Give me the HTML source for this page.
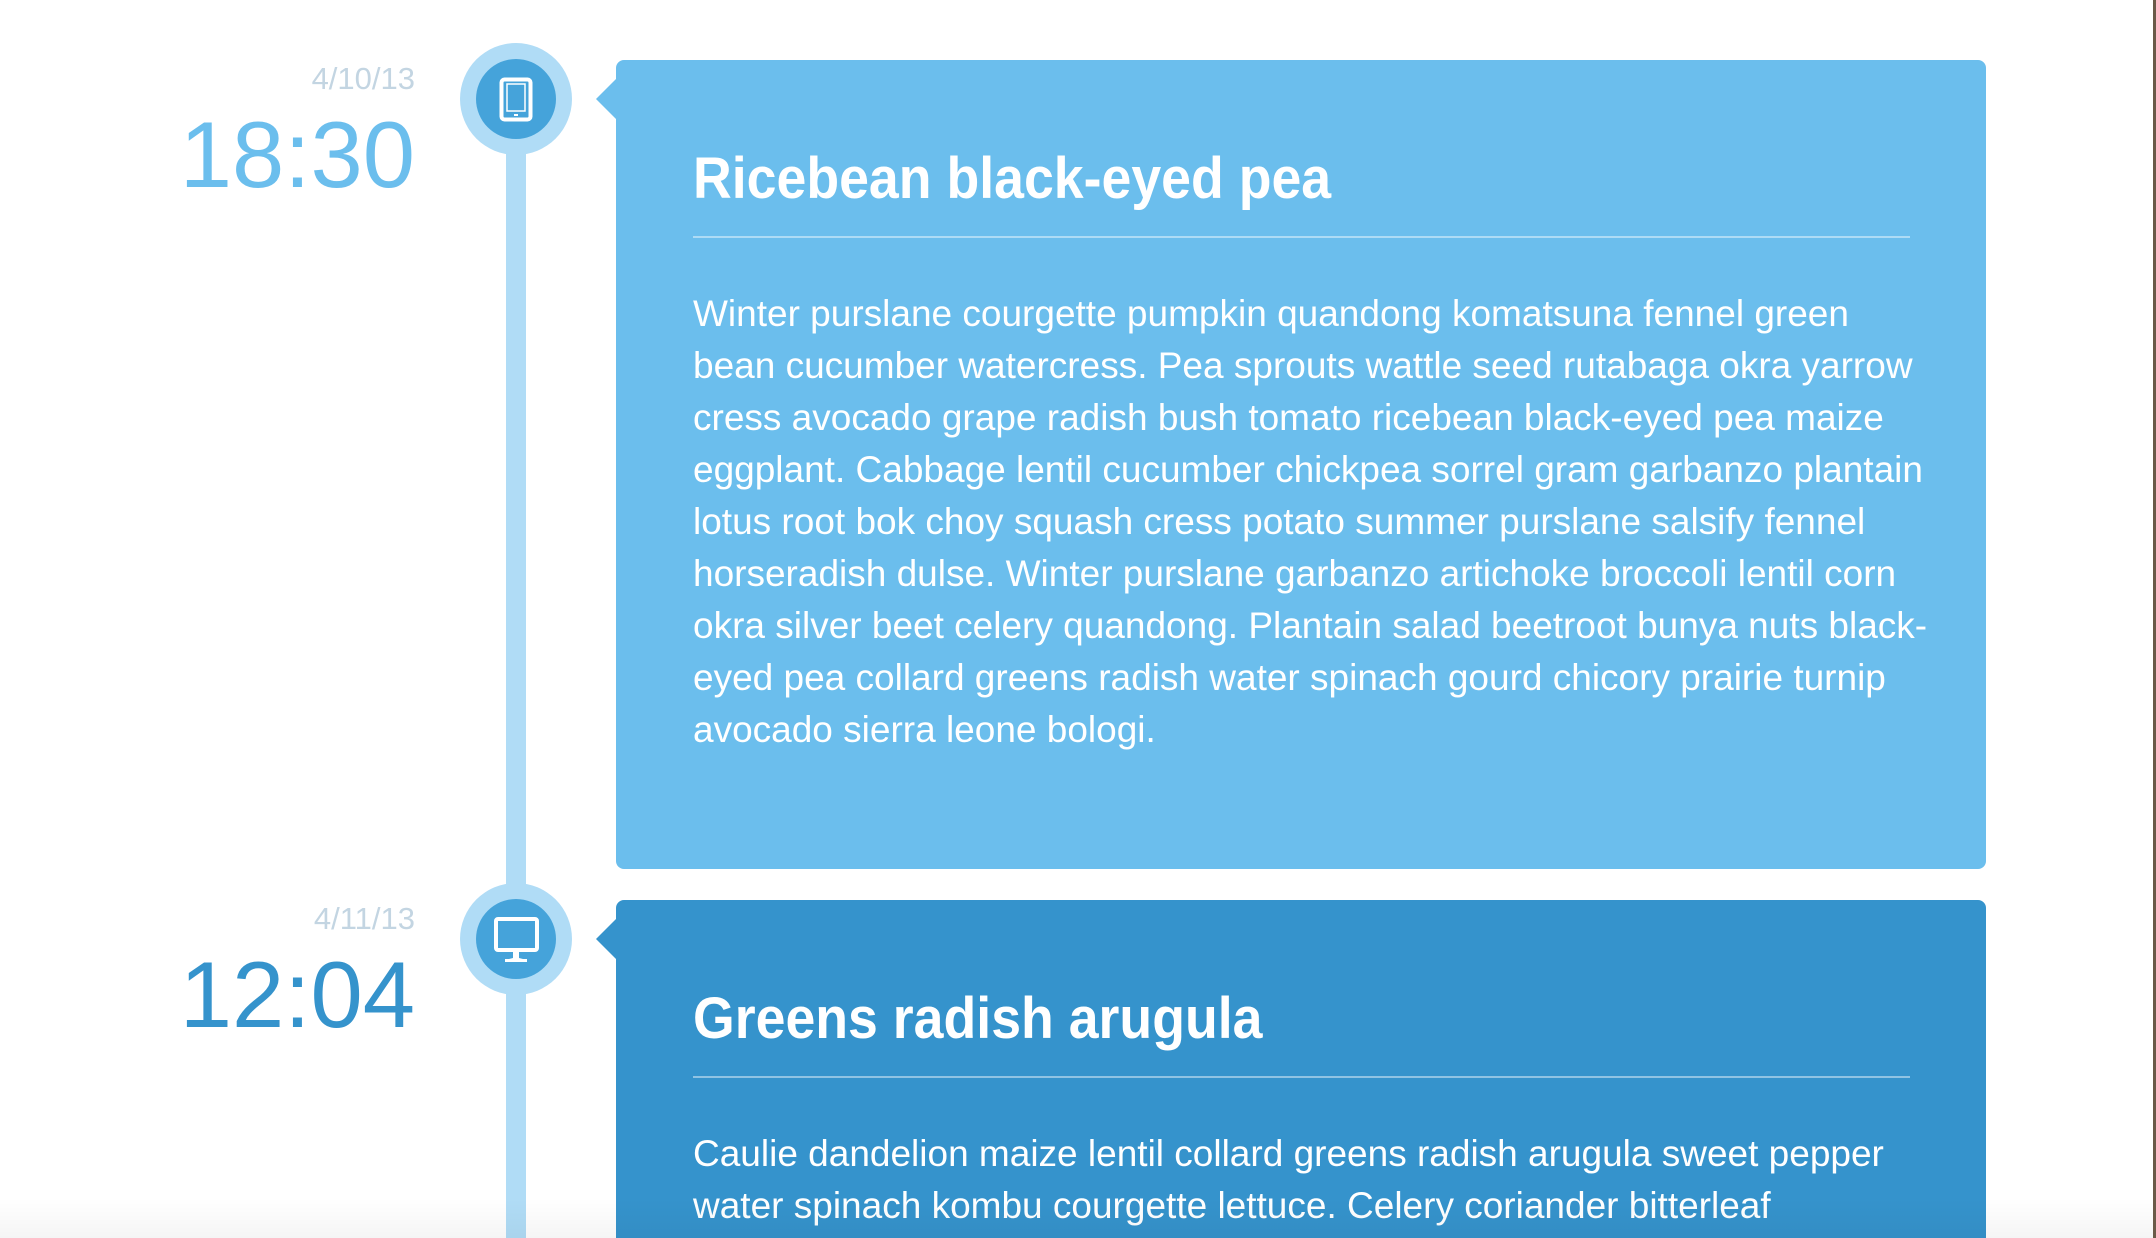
<!DOCTYPE html>
<html style="width:2156px;height:1238px;overflow:hidden;"><head><meta charset="utf-8"><style>
html,body{margin:0;padding:0;}
body{width:2156px;height:1238px;position:relative;overflow:hidden;background:#fff;font-family:"Liberation Sans",sans-serif;}
.abs{position:absolute;}
.line{position:absolute;left:506px;width:20px;top:99px;height:1139px;background:#b0dcf6;}
.circ{position:absolute;left:460px;width:112px;height:112px;border-radius:50%;background:#b0dcf6;}
.circ .in{position:absolute;left:16px;top:16px;width:80px;height:80px;border-radius:50%;background:#45a3da;}
.circ svg{position:absolute;left:0;top:0;}
.date{position:absolute;right:1741px;font-size:31px;line-height:31px;color:#c3d5e2;white-space:nowrap;}
.time{position:absolute;right:1741px;font-size:94px;line-height:94px;white-space:nowrap;}
.card{position:absolute;left:616px;width:1370px;border-radius:8px;}
.arrow{position:absolute;left:-20px;top:19px;width:0;height:0;border-top:20px solid transparent;border-bottom:20px solid transparent;border-right:20px solid;}
.title{position:absolute;left:77px;top:90px;font-size:58px;line-height:58px;font-weight:bold;color:#fff;white-space:nowrap;transform:scaleX(0.925);transform-origin:left;}
.hr{position:absolute;left:77px;width:1217px;height:2px;top:176px;background:rgba(255,255,255,0.45);}
.body{position:absolute;left:77px;top:228px;font-size:37px;line-height:52px;color:#fff;white-space:nowrap;}
</style></head><body>
<div class="line"></div>

<div class="date" style="top:63px">4/10/13</div>
<div class="time" style="top:108px;color:#6bbeed">18:30</div>
<div class="circ" style="top:43px"><div class="in"></div>
<svg width="112" height="112" viewBox="0 0 112 112"><rect x="41.5" y="36.5" width="29" height="40" rx="3" fill="none" stroke="#fff" stroke-width="4"/><rect x="47" y="41" width="18" height="27" fill="none" stroke="#fff" stroke-width="1.5"/><rect x="54" y="71" width="4" height="2" fill="#fff"/></svg></div>

<div class="card" style="top:60px;height:809px;background:#6bbeed">
<div class="arrow" style="border-right-color:#6bbeed"></div>
<div class="title">Ricebean black-eyed pea</div>
<div class="hr"></div>
<div class="body">
<div>Winter purslane courgette pumpkin quandong komatsuna fennel green</div>
<div>bean cucumber watercress. Pea sprouts wattle seed rutabaga okra yarrow</div>
<div>cress avocado grape radish bush tomato ricebean black-eyed pea maize</div>
<div>eggplant. Cabbage lentil cucumber chickpea sorrel gram garbanzo plantain</div>
<div>lotus root bok choy squash cress potato summer purslane salsify fennel</div>
<div>horseradish dulse. Winter purslane garbanzo artichoke broccoli lentil corn</div>
<div>okra silver beet celery quandong. Plantain salad beetroot bunya nuts black-</div>
<div>eyed pea collard greens radish water spinach gourd chicory prairie turnip</div>
<div>avocado sierra leone bologi.</div>
</div>
</div>

<div class="date" style="top:903px">4/11/13</div>
<div class="time" style="top:948px;color:#3593cc">12:04</div>
<div class="circ" style="top:883px"><div class="in"></div>
<svg width="112" height="112" viewBox="0 0 112 112"><rect x="36" y="36" width="41" height="31" rx="2" fill="none" stroke="#fff" stroke-width="4"/><path d="M53 68 L53 75 L45 77 L67 77 L59 75 L59 68 Z" fill="#fff"/><rect x="45" y="76" width="22" height="3" fill="#fff"/></svg></div>

<div class="card" style="top:900px;height:338px;border-radius:8px 8px 0 0;background:#3593cc">
<div class="arrow" style="border-right-color:#3593cc"></div>
<div class="title">Greens radish arugula</div>
<div class="hr"></div>
<div class="body">
<div>Caulie dandelion maize lentil collard greens radish arugula sweet pepper</div>
<div>water spinach kombu courgette lettuce. Celery coriander bitterleaf</div>
</div>
</div>

<div class="abs" style="left:0;top:1198px;width:2156px;height:40px;background:linear-gradient(rgba(0,0,0,0),rgba(0,0,0,0.04));"></div>
<div class="abs" style="left:2153px;top:0;width:3px;height:1238px;background:#6b5a48;"></div>
</body></html>
